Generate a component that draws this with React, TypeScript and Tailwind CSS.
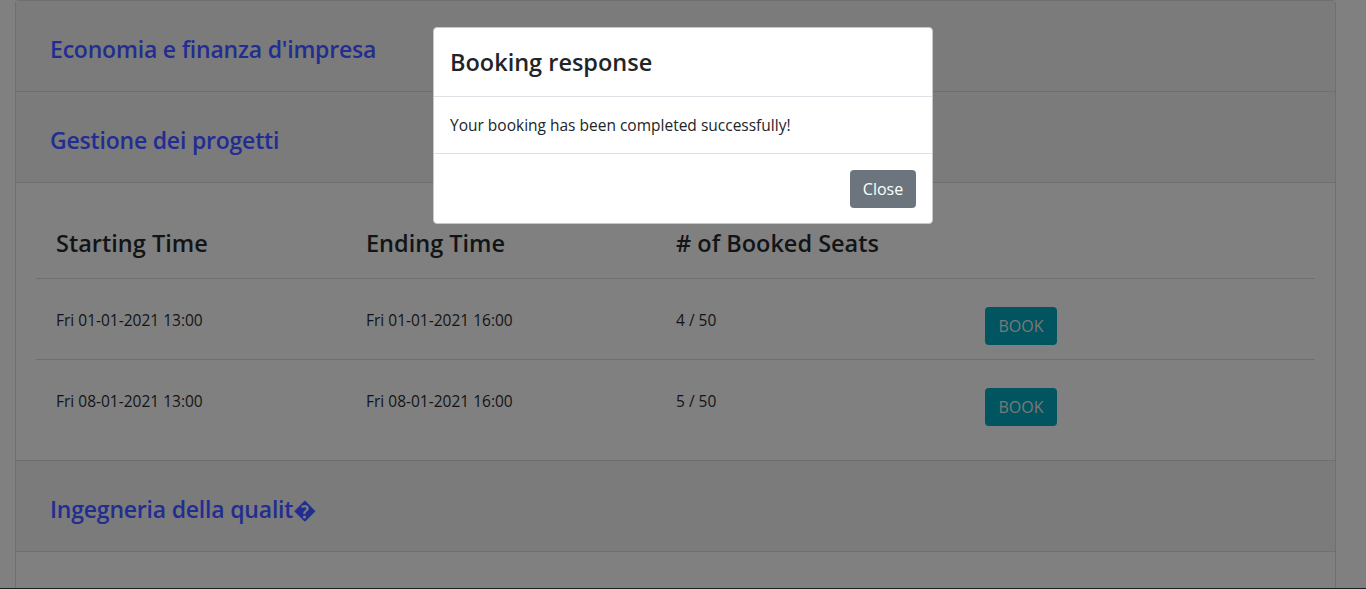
import React from "react";

const rows = [
  { start: "Fri 01-01-2021 13:00", end: "Fri 01-01-2021 16:00", seats: "4 / 50" },
  { start: "Fri 08-01-2021 13:00", end: "Fri 08-01-2021 16:00", seats: "5 / 50" },
];

function Header({ title }: { title: string }) {
  return (
    <div className="h-[91px] border-b border-[#6f6f6f] bg-[#7b7b7b] flex items-center pl-[34px]">
      <span className="text-[23px] leading-[30px] font-semibold text-[#222d92] pt-[6px] tracking-[-0.2px]">{title}</span>
    </div>
  );
}

export default function App() {
  return (
    <div className="relative w-[1366px] h-[589px] overflow-hidden bg-[#808080] font-['Open_Sans',sans-serif] text-[#121416]">
      <div className="h-[588px] overflow-hidden">
        <div className="ml-[15px] w-[1321px] border-x border-t border-[#6f6f6f] rounded-t-[4px]">
          <Header title="Economia e finanza d'impresa" />
          <Header title="Gestione dei progetti" />
          <div className="border-b border-[#6f6f6f] p-[20px] h-[278px]">
            <div className="w-[1279px]">
              <div className="flex h-[76px] border-b border-[#6f6f6f] text-[23.5px] leading-[29px] font-semibold">
                <div className="w-[310px] pl-[20px] pt-[26px]">Starting Time</div>
                <div className="w-[310px] pl-[20px] pt-[26px]">Ending Time</div>
                <div className="w-[310px] pl-[20px] pt-[26px]"># of Booked Seats</div>
                <div className="flex-1"></div>
              </div>
              {rows.map((r, i) => (
                <div
                  key={i}
                  className={`flex h-[81px] text-[15.5px] leading-[24px] ${i === 0 ? "border-b border-[#6f6f6f]" : ""}`}
                >
                  <div className="w-[310px] pl-[20px] pt-[29px]">{r.start}</div>
                  <div className="w-[310px] pl-[20px] pt-[29px]">{r.end}</div>
                  <div className="w-[310px] pl-[20px] pt-[29px]">{r.seats}</div>
                  <div className="flex-1 pl-[19px] pt-[28px]">
                    <button className="h-[38px] w-[72px] rounded-[4px] bg-[#005560] text-[#7a7a7a] text-[16px]">
                      BOOK
                    </button>
                  </div>
                </div>
              ))}
            </div>
          </div>
          <Header title="Ingegneria della qualit�" />
          <div className="h-[40px]"></div>
        </div>
      </div>
      <div className="h-[1px] bg-[#1c1c1c]"></div>

      <div className="absolute left-[433px] top-[27px] w-[500px] bg-white border border-[#c8c8c8] rounded-[4px] text-[#212529]">
        <div className="h-[69px] border-b border-[#dee2e6] px-[16px] flex items-center">
          <span className="text-[23.5px] leading-[30px] font-semibold">Booking response</span>
        </div>
        <div className="h-[57px] border-b border-[#dee2e6] px-[16px] flex items-center">
          <span className="text-[15.5px] leading-[24px]">Your booking has been completed successfully!</span>
        </div>
        <div className="h-[69px] flex items-start justify-end pt-[16px] pr-[16px]">
          <button className="h-[38px] w-[66px] rounded-[4px] bg-[#6c757d] text-white text-[16px]">Close</button>
        </div>
      </div>
    </div>
  );
}
